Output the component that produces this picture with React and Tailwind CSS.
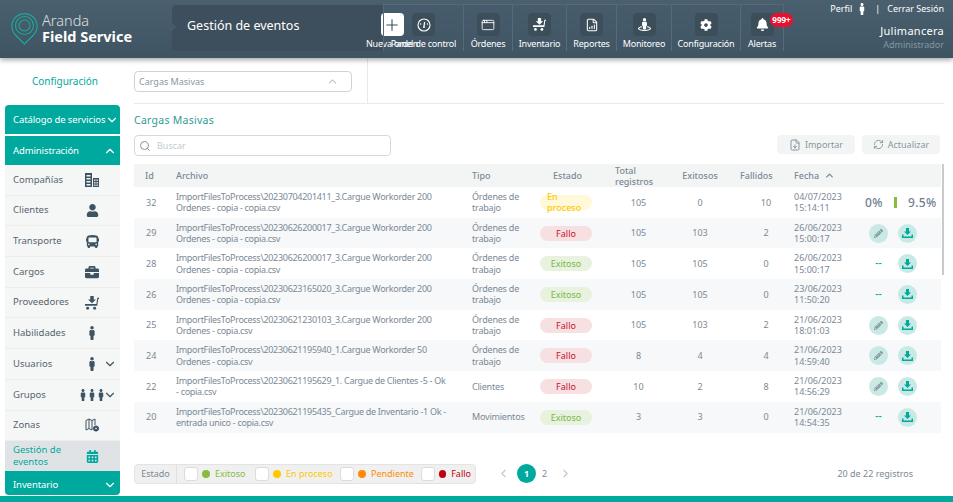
import { Plus, AppWindow, FileBarChart, ChevronDown, ChevronUp, ChevronLeft, ChevronRight, Search, RefreshCw, FileDown } from "lucide-react";
import { FaBell, FaBriefcase, FaBus, FaCog, FaMale, FaPencilAlt, FaStreetView, FaUser, FaCalendarAlt } from "react-icons/fa";

function Cart({ size = 14 }) {
  return (
    <svg width={size} height={size} viewBox="0 0 16 16" fill="currentColor">
      <path d="M6 0h4v4h2.5L8 8.2 3.5 4H6z" />
      <path d="M0 9h13l1-7h2v1.4h-.9L14 11H0z" />
      <circle cx="3" cy="14" r="1.7" />
      <circle cx="11" cy="14" r="1.7" />
    </svg>
  );
}

function Dial() {
  return (
    <svg width="14" height="14" viewBox="0 0 14 14" fill="none" stroke="currentColor">
      <circle cx="7" cy="7" r="6" strokeWidth="1.1" />
      <path d="M7 8.5 7.6 4" strokeWidth="1.3" />
      <circle cx="7" cy="9" r="1" fill="currentColor" stroke="none" />
      <circle cx="3.6" cy="6" r=".7" fill="currentColor" stroke="none" />
      <circle cx="10.4" cy="6" r=".7" fill="currentColor" stroke="none" />
    </svg>
  );
}

function Towers() {
  return (
    <svg width="14" height="14" viewBox="0 0 14 14" fill="currentColor">
      <path fillRule="evenodd" d="M0 0h7v14H0zM1.5 2v1.4h4V2zm0 3v1.4h4V5zm0 3v1.4h4V8zm0 3v1.4h4V11z" />
      <path fillRule="evenodd" d="M8 5h6v9H8zM9.2 6.5v1.4h1.3V6.5zm2.3 0v1.4h1.3V6.5zM9.2 9v1.4h1.3V9zm2.3 0v1.4h1.3V9zm-2.3 2.5v1.4h1.3v-1.4zm2.3 0v1.4h1.3v-1.4z" />
    </svg>
  );
}

function ZoneMap() {
  return (
    <svg width="15" height="15" viewBox="0 0 15 15" fill="none" stroke="currentColor" strokeWidth="1">
      <path d="M1 2.5 4 1l3 1.5L10 1v6M1 2.5V12l3-1.5L7 12M4 1v9.5M7 2.5V12" />
      <circle cx="11" cy="10.5" r="2.6" fill="currentColor" />
      <circle cx="11" cy="10.5" r=".8" fill="#f5f6f6" stroke="none" />
    </svg>
  );
}

const NAV = [
  { label: "Órdenes", w: "w-[49px]", icon: <AppWindow size={14} strokeWidth={1.5} /> },
  { label: "Inventario", w: "w-[54px]", icon: <Cart size={13} /> },
  { label: "Reportes", w: "w-[50px]", icon: <FileBarChart size={14} strokeWidth={1.8} /> },
  { label: "Monitoreo", w: "w-[55px]", icon: <FaStreetView size={13} /> },
  { label: "Configuración", w: "w-[69px]", icon: <FaCog size={12} /> },
];

const MENU = [
  { label: "Compañías", icon: <Towers /> },
  { label: "Clientes", icon: <FaUser size={13} /> },
  { label: "Transporte", icon: <FaBus size={13} /> },
  { label: "Cargos", icon: <FaBriefcase size={14} /> },
  { label: "Proveedores", icon: <Cart size={14} /> },
  { label: "Habilidades", icon: <FaMale size={14} /> },
  { label: "Usuarios", icon: <FaMale size={14} />, more: true },
  { label: "Grupos", icon: <span className="flex -space-x-[3px]"><FaMale size={12} /><FaMale size={12} /><FaMale size={12} /></span>, more: true },
  { label: "Zonas", icon: <ZoneMap /> },
];

const BASE = "ImportFilesToProcess\\";
const ROWS = [
  { id: 32, file: [BASE + "20230704201411_3.Cargue Workorder 200", "Ordenes - copia - copia.csv"], tipo: "Órdenes de trabajo", estado: "En proceso", total: 105, ok: 0, bad: 10, fecha: "04/07/2023", hora: "15:14:11", mode: "progress" },
  { id: 29, file: [BASE + "20230626200017_3.Cargue Workorder 200", "Ordenes - copia - copia.csv"], tipo: "Órdenes de trabajo", estado: "Fallo", total: 105, ok: 103, bad: 2, fecha: "26/06/2023", hora: "15:00:17", mode: "edit" },
  { id: 28, file: [BASE + "20230626200017_3.Cargue Workorder 200", "Ordenes - copia - copia.csv"], tipo: "Órdenes de trabajo", estado: "Exitoso", total: 105, ok: 105, bad: 0, fecha: "26/06/2023", hora: "15:00:17", mode: "none" },
  { id: 26, file: [BASE + "20230623165020_3.Cargue Workorder 200", "Ordenes - copia - copia.csv"], tipo: "Órdenes de trabajo", estado: "Exitoso", total: 105, ok: 105, bad: 0, fecha: "23/06/2023", hora: "11:50:20", mode: "none" },
  { id: 25, file: [BASE + "20230621230103_3.Cargue Workorder 200", "Ordenes - copia.csv"], tipo: "Órdenes de trabajo", estado: "Fallo", total: 105, ok: 103, bad: 2, fecha: "21/06/2023", hora: "18:01:03", mode: "edit" },
  { id: 24, file: [BASE + "20230621195940_1.Cargue Workorder 50", "Ordenes - copia.csv"], tipo: "Órdenes de trabajo", estado: "Fallo", total: 8, ok: 4, bad: 4, fecha: "21/06/2023", hora: "14:59:40", mode: "edit" },
  { id: 22, file: [BASE + "20230621195629_1. Cargue de Clientes -5 - Ok", "- copia.csv"], tipo: "Clientes", estado: "Fallo", total: 10, ok: 2, bad: 8, fecha: "21/06/2023", hora: "14:56:29", mode: "edit" },
  { id: 20, file: [BASE + "20230621195435_Cargue de Inventario -1 Ok -", "entrada unico - copia.csv"], tipo: "Movimientos", estado: "Exitoso", total: 3, ok: 3, bad: 0, fecha: "21/06/2023", hora: "14:54:35", mode: "none" },
];

const PILL = {
  "En proceso": "bg-[#fff8d9] text-[#ffc800] font-medium justify-start pl-[7px]",
  Fallo: "bg-[#f6e0e1] text-[#c8102e] justify-center",
  Exitoso: "bg-[#e8f2df] text-[#7ab648] justify-center",
};

const FILTERS = [
  { label: "Exitoso", dot: "bg-[#86bc3f]", text: "text-[#86bc3f]", w: "w-[71px]" },
  { label: "En proceso", dot: "bg-[#ffc800]", text: "text-[#ffc800]", w: "w-[85px]" },
  { label: "Pendiente", dot: "bg-[#ff8c00]", text: "text-[#ff8c00]", w: "w-[81px]" },
  { label: "Fallo", dot: "bg-[#c00010]", text: "text-[#c00010]", w: "w-[50px]" },
];

function Logo() {
  return (
    <svg width="27" height="33" viewBox="0 0 27 33" fill="none" stroke="#1ba99c">
      <path d="M13.5 32 L4.5 23 A12.6 12.6 0 1 1 22.5 23 Z" strokeWidth="1.1" />
      <circle cx="13.5" cy="13.5" r="9" strokeWidth="1.1" />
      <circle cx="13.5" cy="13.5" r="5.5" strokeWidth="1.1" />
    </svg>
  );
}

function NavItem({ label, w, icon, children }) {
  return (
    <div className={`${w} flex flex-col items-center relative border-l border-[#566b79]`}>
      <div className="mt-[8px] w-[23px] h-[23px] rounded bg-[#3c4e5a] flex items-center justify-center text-white">
        {icon}
      </div>
      {children}
      <span className="mt-[1px] text-[9px] tracking-[-0.2px] leading-[14px] text-white whitespace-nowrap">{label}</span>
    </div>
  );
}

function DownloadBtn() {
  return (
    <button className="w-[19px] h-[19px] rounded-full bg-[#c9e9e4] flex items-center justify-center">
      <svg width="11" height="10" viewBox="0 0 11 10" fill="#00a99d">
        <path d="M4 0h3v3.5h2L5.5 7 2 3.5h2z" />
        <path d="M0 6.5h1.5V8.4h8V6.5H11V10H0z" />
      </svg>
    </button>
  );
}

function SideHead({ label, open, className }) {
  return (
    <div className={`shrink-0 bg-[#00a99d] flex items-center justify-between pl-[8px] pr-[3px] text-white text-[9.5px] tracking-[-0.1px] ${className}`}>
      <span className="whitespace-nowrap">{label}</span>
      {open ? <ChevronUp size={14} className="shrink-0" /> : <ChevronDown size={14} className="shrink-0" />}
    </div>
  );
}

function Actions({ mode }) {
  if (mode === "progress") {
    return (
      <div className="flex items-center text-[#71808f] text-[12px] font-medium tracking-wide pl-[5px]">
        <span className="w-[29px]">0%</span>
        <span className="w-[3px] h-[11px] bg-[#86bc3f]" />
        <span className="ml-[11px]">9.5%</span>
      </div>
    );
  }
  return (
    <div className="flex items-center pl-[9px] gap-[10px]">
      {mode === "edit" ? (
        <button className="w-[19px] h-[19px] rounded-full bg-[#c9e9e4] flex items-center justify-center text-[#8a96a0]">
          <FaPencilAlt size={9} />
        </button>
      ) : (
        <span className="w-[19px] text-center text-[#00a99d] text-[10px] font-medium">--</span>
      )}
      <DownloadBtn />
    </div>
  );
}

export default function App() {
  return (
    <div className="h-[502px] w-[953px] overflow-hidden flex flex-col bg-white text-[#7b8995] font-['Roboto','Liberation_Sans',sans-serif]">
      {/* header */}
      <header className="h-[58px] shrink-0 flex bg-gradient-to-b from-[#4a606f] to-[#3f5462] shadow-[0_2px_5px_rgba(0,0,0,0.35)] relative z-10">
        <div className="w-[172px] shrink-0 flex items-center pl-[11px] pb-[1px] gap-[4px]">
          <Logo />
          <div className="text-white">
            <div className="text-[14.5px] leading-[15px] font-light opacity-80">Aranda</div>
            <div className="text-[14.5px] leading-[16px] font-bold">Field Service</div>
          </div>
        </div>
        <div className="relative w-[211px] h-[46px] mt-[5px] pb-[3px] bg-[#3d4f5c] rounded-l flex items-center pl-[15px] text-white text-[12.5px]">
          <span className="absolute -left-[3px] top-[19px] w-[6px] h-[6px] rotate-45 bg-[#455b69]" />
          Gestión de eventos
        </div>
        <div className="relative h-[47px] mt-[4px] flex bg-[#44586a]/40 border-t border-r border-[#566b79]">
          <div className="w-[50px] -ml-[16px] flex flex-col items-center">
            <div className="mt-[8px] w-[23px] h-[23px] rounded-sm bg-white flex items-center justify-center text-[#3d4f5c]">
              <Plus size={18} strokeWidth={1.5} />
            </div>
            <span className="mt-[1px] text-[9px] tracking-[-0.2px] leading-[14px] text-white whitespace-nowrap">Nueva orden</span>
          </div>
          <div className="-ml-[34px]">
            <NavItem label="Panel de control" w="w-[80px]" icon={<Dial />} />
          </div>
          {NAV.map((n) => (
            <NavItem key={n.label} {...n} />
          ))}
          <NavItem label="Alertas" w="w-[43px]" icon={<FaBell size={13} />}>
            <span className="absolute left-[29px] top-[8px] w-[23px] h-[14px] rounded-full bg-[#e8112d] text-white text-[8px] font-bold flex items-center justify-center">999+</span>
          </NavItem>
        </div>
        <div className="ml-auto pr-[9px] pt-[2px] flex flex-col items-end text-white">
          <div className="flex items-center text-[9px] leading-[14px]">
            <span>Perfil</span>
            <FaMale size={12} className="ml-[4px]" />
            <span className="mx-[7px]">|</span>
            <span>Cerrar Sesión</span>
          </div>
          <div className="mt-[7px] text-[11px] leading-[15px] tracking-wide">Julimancera</div>
          <div className="text-[9px] leading-[13px] text-[#8496a1]">Administrador</div>
        </div>
      </header>

      <div className="flex-1 flex min-h-0">
        {/* sidebar */}
        <aside className="w-[115px] ml-[5px] shrink-0 flex flex-col">
          <div className="h-[47px] shrink-0 flex items-center justify-center pl-[5px] text-[#00a99d] text-[10px]">Configuración</div>
          <SideHead label="Catálogo de servicios" className="h-[29px] pt-[1px] rounded-t-sm" />
          <div className="h-[2px] shrink-0" />
          <SideHead label="Administración" open className="h-[29px] pt-[1px]" />
          <div className="bg-[#f5f6f6] shrink-0">
            {MENU.map((m) => (
              <div key={m.label} className="h-[30.7px] flex items-center pl-[8px] pr-[3px] text-[9.5px] text-[#56646e] border-b border-[#eceeee]">
                <span className="flex-1">{m.label}</span>
                <span className={`text-[#3f5462] flex justify-center w-[20px] ${m.more ? "mr-[1px]" : "mr-[15px]"}`}>{m.icon}</span>
                {m.more && <ChevronDown size={14} className="text-[#3f5462]" />}
              </div>
            ))}
            <div className="h-[30px] flex items-center pl-[8px] pr-[3px] bg-[#e0e3e6] text-[#00a99d] text-[9.5px] leading-[12px]">
              <span className="w-[60px] flex-1">Gestión de eventos</span>
              <span className="w-[20px] mr-[15px] flex justify-center"><FaCalendarAlt size={13} /></span>
            </div>
          </div>
          <SideHead label="Inventario" className="h-[24px] pt-[3px] rounded-b-sm" />
        </aside>

        {/* main */}
        <main className="w-[810px] ml-[14px] shrink-0 flex flex-col">
          <div className="h-[46px] shrink-0 flex border-b border-[#e8eaeb]">
            <div className="w-[218px] h-[21px] mt-[13px] border border-[#cfd3d6] rounded-sm flex items-center justify-between pl-[4px] pr-[12px] text-[9px] text-[#8a96a0]">
              Cargas Masivas
              <ChevronUp size={13} className="text-[#c0c5c9]" />
            </div>
            <div className="ml-[15px] border-l border-[#e8eaeb]" />
          </div>
          <div className="h-[31px] shrink-0 pt-[9px] text-[10.5px] leading-[15px] text-[#2e9c93] tracking-wide">Cargas Masivas</div>

          <div className="h-[29px] shrink-0 flex items-start">
            <div className="w-[257px] h-[21px] border border-[#d5d8da] rounded-sm flex items-center pl-[4px] gap-[6px]">
              <Search size={12} className="text-[#8a96a0]" />
              <span className="text-[9px] text-[#c3cbd1]">Buscar</span>
            </div>
            <button className="ml-auto w-[78px] h-[19px] bg-[#f3f5f5] rounded-sm flex items-center justify-center gap-[4px] text-[9px] text-[#8a96a0]">
              <FileDown size={12} /> Importar
            </button>
            <button className="ml-[7px] mr-[4px] w-[78px] h-[19px] bg-[#f3f5f5] rounded-sm flex items-center justify-center gap-[4px] text-[9px] text-[#8a96a0]">
              <RefreshCw size={11} /> Actualizar
            </button>
          </div>

          <div className="flex items-start">
            <table className="w-[807px] table-fixed border-collapse text-[9px] leading-[11.5px]">
              <colgroup>
                <col className="w-[42px]" />
                <col className="w-[296px]" />
                <col className="w-[68px]" />
                <col className="w-[75px]" />
                <col className="w-[47px]" />
                <col className="w-[76px]" />
                <col className="w-[56px]" />
                <col className="w-[66px]" />
                <col />
              </colgroup>
              <thead>
                <tr className="h-[23px] bg-[#f3f5f5] text-left leading-[11px]">
                  <th className="pl-[11px] font-medium">Id</th>
                  <th className="font-medium">Archivo</th>
                  <th className="font-medium">Tipo</th>
                  <th className="pl-[13px] font-medium">Estado</th>
                  <th className="font-medium">Total registros</th>
                  <th className="text-center font-medium">Exitosos</th>
                  <th className="pl-[2px] font-medium">Fallidos</th>
                  <th className="font-medium">
                    <span className="flex items-center gap-[5px]">Fecha <ChevronUp size={11} strokeWidth={3} /></span>
                  </th>
                  <th />
                </tr>
              </thead>
              <tbody>
                {ROWS.map((r, i) => (
                  <tr key={r.id} className={`h-[30.7px] ${i % 2 ? "bg-[#f6f8f9]" : "bg-white"}`}>
                    <td className="pl-[12px]">{r.id}</td>
                    <td className="text-[9px] tracking-[-0.3px] whitespace-nowrap">{r.file[0]}<br />{r.file[1]}</td>
                    <td className="pr-[6px] tracking-[-0.2px]">{r.tipo}</td>
                    <td>
                      <span className={`w-[52px] h-[15px] rounded-full flex items-center leading-[11px] ${PILL[r.estado]}`}>{r.estado}</span>
                    </td>
                    <td className="text-center">{r.total}</td>
                    <td className="text-center">{r.ok}</td>
                    <td className="text-center">{r.bad}</td>
                    <td>{r.fecha}<br />{r.hora}</td>
                    <td><Actions mode={r.mode} /></td>
                  </tr>
                ))}
              </tbody>
            </table>
            <div className="w-[2px] h-[111px] ml-[1px] bg-[#c8cbcd]" />
          </div>

          <div className="mt-[31px] flex items-center text-[9px] pr-[31px]">
            <div className="w-[342px] h-[20px] flex items-center bg-[#f0f0f0] border border-[#e3e3e3] rounded-sm">
              <span className="w-[42px] text-center border-r border-[#e0e0e0] leading-[18px]">Estado</span>
              <div className="flex pl-[7px]">
                {FILTERS.map((f) => (
                  <label key={f.label} className={`${f.w} flex items-center`}>
                    <span className="w-[14px] h-[14px] bg-white border border-[#dcdcdc] rounded-[3px]" />
                    <span className={`w-[8px] h-[8px] ml-[4px] rounded-full ${f.dot}`} />
                    <span className={`ml-[5px] ${f.text}`}>{f.label}</span>
                  </label>
                ))}
              </div>
            </div>
            <ChevronLeft size={13} className="ml-[21px] text-[#c3c8cc]" />
            <span className="ml-[7px] w-[19px] h-[19px] rounded-full bg-[#00a99d] text-white font-bold flex items-center justify-center">1</span>
            <span className="ml-[6px]">2</span>
            <ChevronRight size={13} className="ml-[12px] text-[#c3c8cc]" />
            <span className="ml-auto">20 de 22 registros</span>
          </div>
        </main>
      </div>

      <footer className="h-[6px] shrink-0 bg-[#00a99d]" />
    </div>
  );
}
